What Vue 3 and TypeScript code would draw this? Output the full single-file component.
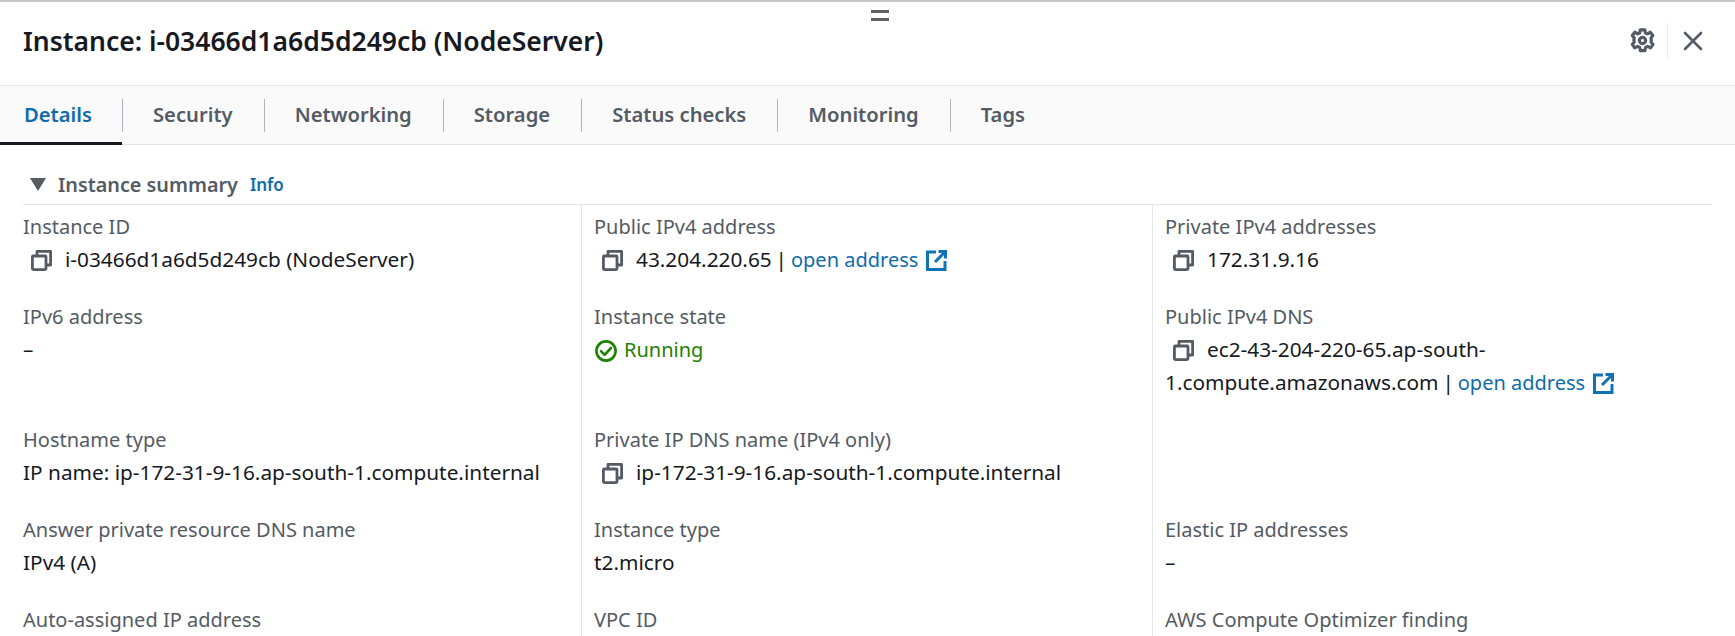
<script setup lang="ts">
interface Field {
  label: string
  value?: string
  copy?: boolean
  link?: boolean
  running?: boolean
}

const tabs: string[] = ['Details', 'Security', 'Networking', 'Storage', 'Status checks', 'Monitoring', 'Tags']

const fields: Field[] = [
  { label: 'Instance ID', value: 'i-03466d1a6d5d249cb (NodeServer)', copy: true },
  { label: 'Public IPv4 address', value: '43.204.220.65', copy: true, link: true },
  { label: 'Private IPv4 addresses', value: '172.31.9.16', copy: true },
  { label: 'IPv6 address', value: '–' },
  { label: 'Instance state', value: 'Running', running: true },
  { label: 'Public IPv4 DNS', value: 'ec2-43-204-220-65.ap-south-1.compute.amazonaws.com', copy: true, link: true },
  { label: 'Hostname type', value: 'IP name: ip-172-31-9-16.ap-south-1.compute.internal' },
  { label: 'Private IP DNS name (IPv4 only)', value: 'ip-172-31-9-16.ap-south-1.compute.internal', copy: true },
  { label: '' },
  { label: 'Answer private resource DNS name', value: 'IPv4 (A)' },
  { label: 'Instance type', value: 't2.micro' },
  { label: 'Elastic IP addresses', value: '–' },
  { label: 'Auto-assigned IP address' },
  { label: 'VPC ID' },
  { label: 'AWS Compute Optimizer finding' }
]
</script>

<template>
  <div class="page">
    <div class="handle"><span></span><span></span></div>
    <header class="head">
      <h1>Instance: i-03466d1a6d5d249cb (NodeServer)</h1>
      <div class="actions">
        <svg class="gear" viewBox="0 0 24 24" width="27" height="27" fill="none" stroke="#545b64" stroke-width="2.8" stroke-linejoin="round">
          <path d="M10 2.5h4l.6 2.8 1.9.8 2.4-1.5 2.3 2.9-1.7 2.2.4 2-.4 1.6 1.9 2.2-2.2 3-2.7-1.3-1.7.9-.7 2.9h-4l-.6-2.9-1.8-.9-2.6 1.3-2.2-3 1.8-2.2-.4-1.7.4-1.9-1.8-2.2 2.3-2.9 2.5 1.5 1.8-.8z" />
          <circle cx="12" cy="12" r="2.8" />
        </svg>
        <span class="sep"></span>
        <svg class="close" viewBox="0 0 20 20" width="20" height="20" stroke="#545b64" stroke-width="2.6" stroke-linecap="round">
          <path d="M2 2l16 16M18 2L2 18" />
        </svg>
      </div>
    </header>

    <nav class="tabs">
      <div v-for="(t, i) in tabs" :key="t" class="tab" :class="{ active: i === 0 }">
        <span class="tab-label">{{ t }}</span>
      </div>
    </nav>

    <section class="summary">
      <div class="summary-head">
        <svg class="caret" viewBox="0 0 16 13" width="16" height="13"><path d="M0 0h16L8 13z" fill="#545b64" /></svg>
        <span class="summary-title">Instance summary</span>
        <span class="info">Info</span>
      </div>
      <div class="grid">
        <div v-for="(f, i) in fields" :key="i" class="cell">
          <div class="label">{{ f.label }}</div>
          <div v-if="f.value" class="value" :class="{ ok: f.running }">
            <svg v-if="f.running" class="status" viewBox="0 0 22 22" width="22" height="22" fill="none" stroke="#1d8102" stroke-width="2.6">
              <circle cx="11" cy="11" r="9.6" />
              <path d="M6 11.2l3.6 3.6L16 8" stroke-linecap="round" stroke-linejoin="round" />
            </svg>
            <svg v-if="f.copy" class="copy" viewBox="0 0 21 21" width="21" height="21" fill="none" stroke="#545b64" stroke-width="2.8" stroke-linejoin="round">
              <rect x="1.4" y="6" width="13.6" height="13.6" rx="1" />
              <path d="M6 6V1.4h13.6V15H15" />
            </svg><span>{{ f.value }}</span><template v-if="f.link"><span class="pipe"> | </span><span class="link">open address</span>
              <svg class="ext" viewBox="0 0 21 21" width="21" height="21" fill="none" stroke="#0f73b4" stroke-width="3">
                <path d="M10 2H1.5v17.5H19V11" />
                <path d="M9 12L19 2M12.5 1.5h7v7" />
              </svg>
            </template>
          </div>
        </div>
      </div>
    </section>
  </div>
</template>

<style>
html, body { margin: 0; background: #fff; overflow: hidden; }
</style>

<style scoped>
.page {
  position: relative;
  width: 1735px;
  height: 636px;
  overflow: hidden;
  box-sizing: border-box;
  border-top: 2px solid #c4c6c8;
  background: #fff;
  font-family: "Noto Sans", "Open Sans", sans-serif;
  color: #16191f;
}
.handle {
  position: absolute;
  left: 871px;
  top: 8px;
  width: 18px;
  display: flex;
  flex-direction: column;
  gap: 5px;
}
.handle span { height: 3px; background: #5f6368; }
.head {
  height: 84px;
  box-sizing: border-box;
  display: flex;
  align-items: center;
  justify-content: space-between;
  padding: 0 32px 6px 23px;
  border-bottom: 1px solid #e3e5e6;
}
h1 {
  margin: 0;
  font-size: 26.5px;
  font-weight: 600;
  line-height: 32px;
}
.actions { display: flex; align-items: center; }
.gear { display: block; }
.sep {
  width: 1px;
  height: 35px;
  background: #eaeded;
  margin: 0 15px 0 11px;
}
.close { display: block; }
.tabs {
  height: 59px;
  box-sizing: border-box;
  display: flex;
  align-items: stretch;
  background: #fafafa;
  border-bottom: 1px solid #e3e5e6;
}
.tab {
  position: relative;
  display: flex;
  align-items: center;
  padding: 0 31px 2px;
  font-size: 20.2px;
  font-weight: 600;
  color: #545b64;
}
.tab:first-child { padding-left: 24px; padding-right: 30px; }
.tab + .tab::before {
  content: "";
  position: absolute;
  left: 0;
  top: 13px;
  height: 33px;
  width: 1px;
  background: #aab7b8;
}
.tab.active { color: #0f6cab; }
.tab.active::after {
  content: "";
  position: absolute;
  left: 0;
  right: 0;
  bottom: -1px;
  height: 3px;
  background: #16191f;
}
.summary { padding: 0 23px; }
.summary-head {
  height: 60px;
  box-sizing: border-box;
  display: flex;
  align-items: center;
  padding: 20px 0 0 7px;
  border-bottom: 1px solid #e3e5e6;
}
.caret { margin-right: 12px; }
.summary-title {
  font-size: 19.8px;
  font-weight: 600;
  color: #545b64;
}
.info {
  margin-left: 12px;
  font-size: 17px;
  font-weight: 600;
  color: #0f6cab;
}
.grid {
  display: grid;
  grid-template-columns: 558px 571px 1fr;
}
.cell {
  padding: 5px 12px 19px;
  min-height: 66px;
}
.cell:nth-child(3n + 1) { padding-left: 0; }
.cell:not(:nth-child(3n + 1)) { border-left: 1px solid #e3e5e6; }
.label {
  font-size: 20px;
  line-height: 33px;
  min-height: 33px;
  color: #545b64;
}
.value {
  font-size: 20.8px;
  line-height: 33px;
}
.value.ok { color: #1d8102; font-size: 20px; }
.copy {
  vertical-align: -4px;
  margin: 0 13px 0 8px;
}
.status {
  vertical-align: -5px;
  margin: 0 7px 0 1px;
}
.pipe { word-spacing: -1.5px; }
.link { color: #0f6cab; font-size: 20px; }
.ext {
  vertical-align: -4px;
  margin-left: 8px;
}
</style>
